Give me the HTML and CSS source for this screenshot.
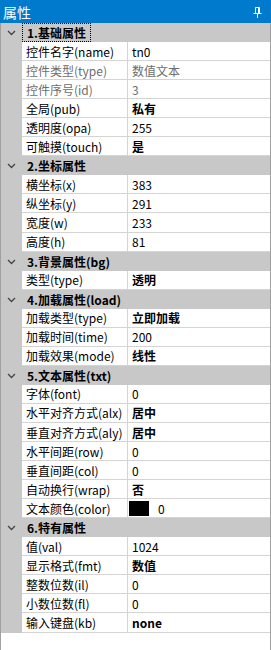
FILE: index.html
```html
<!DOCTYPE html>
<html lang="zh-CN">

<head>
    <meta charset="UTF-8">
    <meta name="viewport" content="width=device-width, initial-scale=1.0">
    <title>属性</title>
    <link rel="stylesheet" href="styles.css">
</head>

<body>
    <div class="panel">
        <div class="panel-title">
            <span>属性</span>
            <!-- 固定图钉 -->
            <svg class="pin" width="9" height="11" viewBox="0 0 9 11">
                <path d="M2.5 0.5h4v6h-4z M0.5 6.5h8 M4.5 6.5v4.5 M5.5 1v5" fill="none" stroke="#fff" stroke-width="1" />
            </svg>
        </div>

        <div class="panel-body">
            <div class="group">
                <div class="group-head">
                    <svg class="chev" width="9" height="6" viewBox="0 0 9 6"><path d="M1 1l3.5 3.5L8 1" fill="none" stroke="#444" stroke-width="1.3" /></svg>
                    <span class="group-name focused">1.基础属性</span>
                </div>
                <div class="prop"><div class="name">控件名字(name)</div><div class="val">tn0</div></div>
                <div class="prop disabled"><div class="name">控件类型(type)</div><div class="val">数值文本</div></div>
                <div class="prop disabled"><div class="name">控件序号(id)</div><div class="val">3</div></div>
                <div class="prop"><div class="name">全局(pub)</div><div class="val bold">私有</div></div>
                <div class="prop"><div class="name">透明度(opa)</div><div class="val">255</div></div>
                <div class="prop"><div class="name">可触摸(touch)</div><div class="val bold">是</div></div>
            </div>

            <div class="group">
                <div class="group-head">
                    <svg class="chev" width="9" height="6" viewBox="0 0 9 6"><path d="M1 1l3.5 3.5L8 1" fill="none" stroke="#444" stroke-width="1.3" /></svg>
                    <span class="group-name">2.坐标属性</span>
                </div>
                <div class="prop"><div class="name">横坐标(x)</div><div class="val">383</div></div>
                <div class="prop"><div class="name">纵坐标(y)</div><div class="val">291</div></div>
                <div class="prop"><div class="name">宽度(w)</div><div class="val">233</div></div>
                <div class="prop"><div class="name">高度(h)</div><div class="val">81</div></div>
            </div>

            <div class="group">
                <div class="group-head">
                    <svg class="chev" width="9" height="6" viewBox="0 0 9 6"><path d="M1 1l3.5 3.5L8 1" fill="none" stroke="#444" stroke-width="1.3" /></svg>
                    <span class="group-name">3.背景属性(bg)</span>
                </div>
                <div class="prop"><div class="name">类型(type)</div><div class="val bold">透明</div></div>
            </div>

            <div class="group">
                <div class="group-head">
                    <svg class="chev" width="9" height="6" viewBox="0 0 9 6"><path d="M1 1l3.5 3.5L8 1" fill="none" stroke="#444" stroke-width="1.3" /></svg>
                    <span class="group-name">4.加载属性(load)</span>
                </div>
                <div class="prop"><div class="name">加载类型(type)</div><div class="val bold">立即加载</div></div>
                <div class="prop"><div class="name">加载时间(time)</div><div class="val">200</div></div>
                <div class="prop"><div class="name">加载效果(mode)</div><div class="val bold">线性</div></div>
            </div>

            <div class="group">
                <div class="group-head">
                    <svg class="chev" width="9" height="6" viewBox="0 0 9 6"><path d="M1 1l3.5 3.5L8 1" fill="none" stroke="#444" stroke-width="1.3" /></svg>
                    <span class="group-name">5.文本属性(txt)</span>
                </div>
                <div class="prop"><div class="name">字体(font)</div><div class="val">0</div></div>
                <div class="prop"><div class="name">水平对齐方式(alx)</div><div class="val bold">居中</div></div>
                <div class="prop"><div class="name">垂直对齐方式(aly)</div><div class="val bold">居中</div></div>
                <div class="prop"><div class="name">水平间距(row)</div><div class="val">0</div></div>
                <div class="prop"><div class="name">垂直间距(col)</div><div class="val">0</div></div>
                <div class="prop"><div class="name">自动换行(wrap)</div><div class="val bold">否</div></div>
                <div class="prop"><div class="name">文本颜色(color)</div><div class="val color-val"><span class="swatch"></span>0</div></div>
            </div>

            <div class="group">
                <div class="group-head">
                    <svg class="chev" width="9" height="6" viewBox="0 0 9 6"><path d="M1 1l3.5 3.5L8 1" fill="none" stroke="#444" stroke-width="1.3" /></svg>
                    <span class="group-name">6.特有属性</span>
                </div>
                <div class="prop"><div class="name">值(val)</div><div class="val">1024</div></div>
                <div class="prop"><div class="name">显示格式(fmt)</div><div class="val bold">数值</div></div>
                <div class="prop"><div class="name">整数位数(il)</div><div class="val">0</div></div>
                <div class="prop"><div class="name">小数位数(fl)</div><div class="val">0</div></div>
                <div class="prop"><div class="name">输入键盘(kb)</div><div class="val bold">none</div></div>
            </div>
        </div>
    </div>
</body>

</html>
```

FILE: styles.css
```css
body {
    margin: 0;
    padding: 0;
    font-family: "Noto Sans CJK SC", "Noto Sans", sans-serif;
    font-size: 12px;
    color: #000;
    background-color: #fff;
}

.panel {
    width: 271px;
    height: 650px;
    display: flex;
    flex-direction: column;
}

.panel-title {
    height: 23px;
    background-color: #007acc;
    color: #fff;
    font-size: 14px;
    display: flex;
    align-items: center;
    justify-content: space-between;
    padding: 0 9px 0 3px;
    box-sizing: border-box;
}

.pin {
    display: block;
    margin-top: 1px;
}

.panel-body {
    flex: 1;
    border-left: 1px solid #a0a0a0;
    border-right: 1px solid #a0a0a0;
}

/* 分组 */
.group {
    background-color: #c8c8c8;
}

.group-head {
    height: 19.06px;
    display: flex;
    align-items: center;
    position: relative;
}

.chev {
    position: absolute;
    left: 6px;
    top: 7px;
}

.group-name {
    margin-left: 21px;
    padding: 0 4px 0 4px;
    height: 100%;
    box-sizing: border-box;
    border: 1px solid transparent;
    display: flex;
    align-items: center;
    font-weight: bold;
}

.group-name.focused {
    border: 1px dotted #000;
}

/* 属性行 */
.prop {
    margin-left: 21px;
    height: 19.06px;
    box-sizing: border-box;
    background-color: #fff;
    border-bottom: 1px solid #d4d4d4;
    display: grid;
    grid-template-columns: 106px 1fr;
}

.prop .name,
.prop .val {
    display: flex;
    align-items: center;
    white-space: nowrap;
    overflow: hidden;
}

.prop .name {
    padding-left: 4px;
    border-right: 1px solid #d4d4d4;
}

.prop .val {
    padding-left: 4px;
}

.prop .bold {
    font-weight: bold;
}

.prop.disabled {
    color: #6d6d6d;
}

.color-val .swatch {
    width: 20px;
    height: 15px;
    background-color: #000;
    margin: 0 9px 0 -3px;
}
```
